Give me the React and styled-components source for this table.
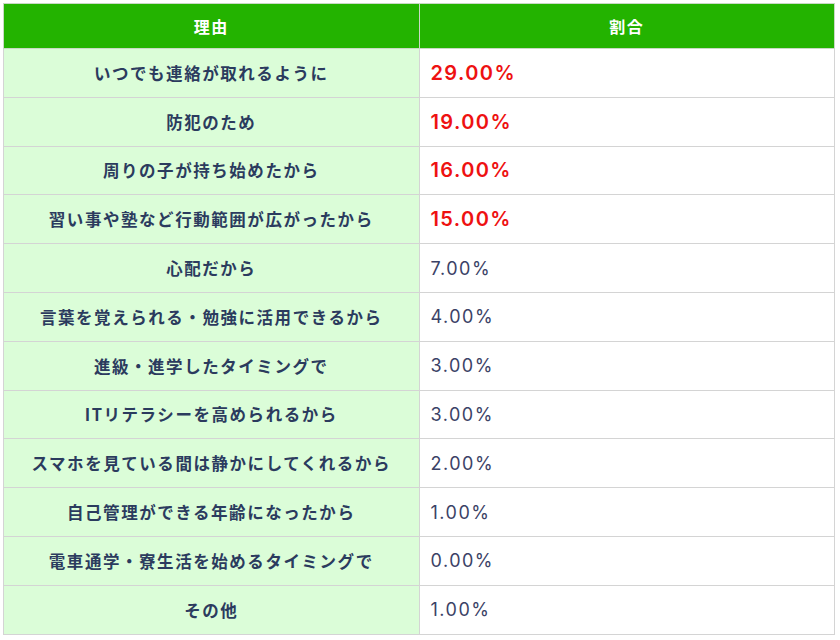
import React from 'react'
import styled, { createGlobalStyle } from 'styled-components'

const rows = [
  { reason: 'いつでも連絡が取れるように', rate: '29.00%', top: true },
  { reason: '防犯のため', rate: '19.00%', top: true },
  { reason: '周りの子が持ち始めたから', rate: '16.00%', top: true },
  { reason: '習い事や塾など行動範囲が広がったから', rate: '15.00%', top: true },
  { reason: '心配だから', rate: '7.00%' },
  { reason: '言葉を覚えられる・勉強に活用できるから', rate: '4.00%' },
  { reason: '進級・進学したタイミングで', rate: '3.00%' },
  { reason: 'ITリテラシーを高められるから', rate: '3.00%' },
  { reason: 'スマホを見ている間は静かにしてくれるから', rate: '2.00%' },
  { reason: '自己管理ができる年齢になったから', rate: '1.00%' },
  { reason: '電車通学・寮生活を始めるタイミングで', rate: '0.00%' },
  { reason: 'その他', rate: '1.00%' }
]

const GlobalStyle = createGlobalStyle`
  body {
    margin: 0;
    background: #fff;
    font-family: "Noto Sans CJK JP", "Noto Sans", sans-serif;
  }
`

const Wrapper = styled.div`
  padding: 3px 5px 0 3px;
`

const Table = styled.table`
  width: 832px;
  border-collapse: collapse;
  table-layout: fixed;
  border: 1px solid #d4d4d4;
`

const HeadCell = styled.th`
  height: 44px;
  padding: 0;
  background: #23b300;
  color: #fff;
  font-size: 16px;
  font-weight: 700;
  letter-spacing: 1.5px;
  text-align: center;
  border: 1px solid #c9d9c5;
`

const ReasonCell = styled.td`
  height: 47.8px;
  padding: 0 4px;
  background: #dbfdd8;
  color: #2b3b5e;
  font-size: 16.5px;
  font-weight: 700;
  letter-spacing: 1.55px;
  text-align: center;
  border: 1px solid #d4d4d4;
  white-space: nowrap;
`

const RateCell = styled.td`
  padding: 0 0 0 11px;
  background: #fff;
  color: ${p => (p.$top ? '#ee1111' : '#3b4266')};
  font-family: "Inter", "Liberation Sans", sans-serif;
  font-size: ${p => (p.$top ? '20px' : '18px')};
  font-weight: ${p => (p.$top ? 600 : 400)};
  letter-spacing: ${p => (p.$top ? '1.4px' : '1.5px')};
  text-align: left;
  border: 1px solid #d4d4d4;
`

export default function App () {
  return (
    <>
      <GlobalStyle />
      <Wrapper>
        <Table>
          <thead>
            <tr>
              <HeadCell>理由</HeadCell>
              <HeadCell>割合</HeadCell>
            </tr>
          </thead>
          <tbody>
            {rows.map((row, i) => (
              <tr key={i}>
                <ReasonCell>{row.reason}</ReasonCell>
                <RateCell $top={row.top}>{row.rate}</RateCell>
              </tr>
            ))}
          </tbody>
        </Table>
      </Wrapper>
    </>
  )
}
